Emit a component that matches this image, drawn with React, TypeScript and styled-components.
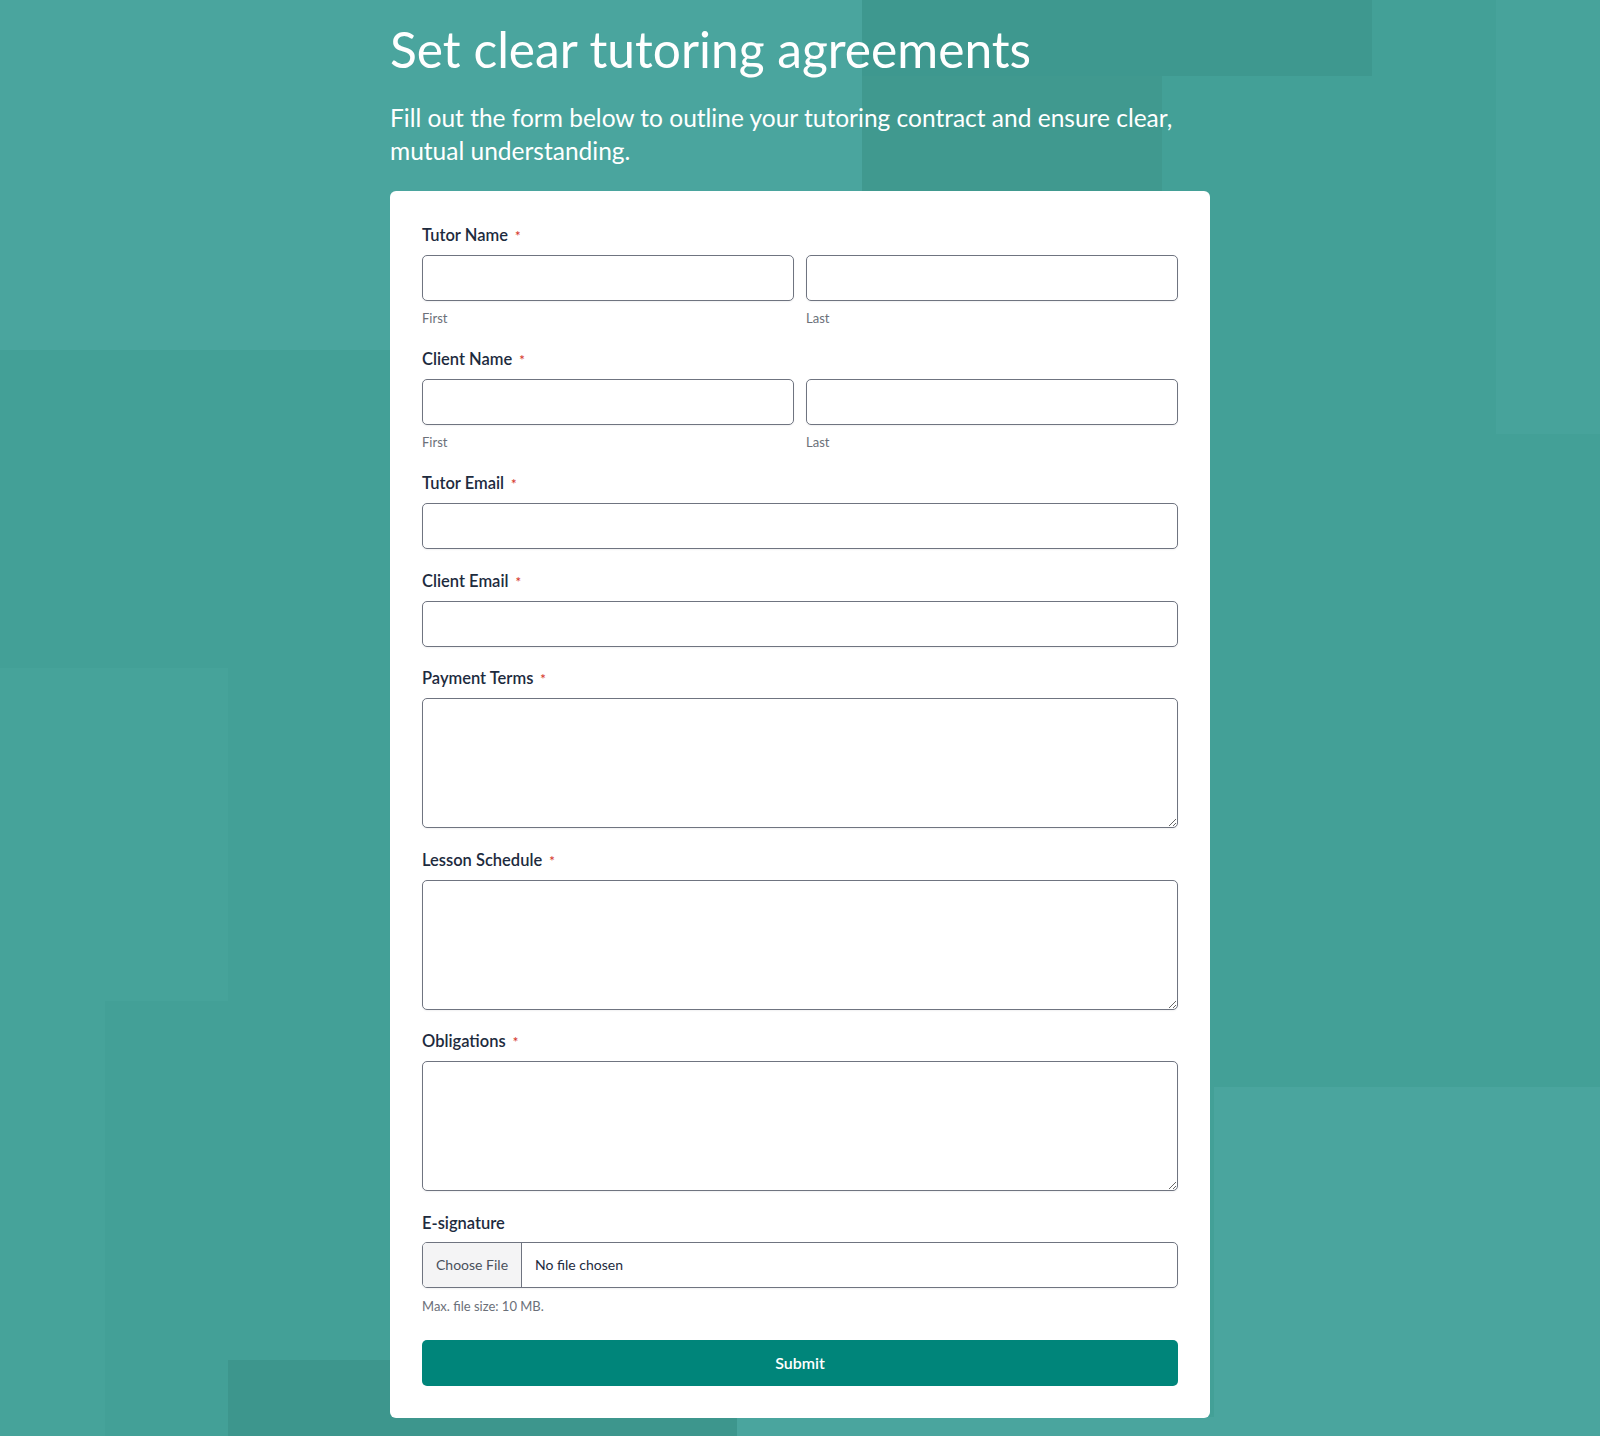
import styled, { createGlobalStyle } from 'styled-components';

const block = (color: string, x: number, y: number, w: number, h: number) =>
  `linear-gradient(${color}, ${color}) ${x}px ${y}px / ${w}px ${h}px no-repeat`;

const GlobalStyle = createGlobalStyle`
  * {
    box-sizing: border-box;
  }
  html, body {
    margin: 0;
    padding: 0;
  }
  body {
    font-family: Lato, "Open Sans", Arial, sans-serif;
    min-height: 1436px;
    background:
      ${block('#3e988f', 862, 0, 510, 76)},
      ${block('#40998f', 862, 76, 300, 115)},
      ${block('#47a39b', 1496, 0, 104, 434)},
      ${block('#4aa59e', 1214, 1087, 386, 349)},
      ${block('#4aa59e', 737, 1417, 477, 19)},
      ${block('#46a39a', 0, 668, 228, 333)},
      ${block('#46a39a', 0, 1001, 105, 435)},
      ${block('#3d968d', 228, 1360, 509, 76)},
      ${block('#4aa59e', 0, 0, 862, 350)},
      #43a097;
  }
`;

const Page = styled.main`
  width: 820px;
  margin: 0 auto;
  padding: 19px 0 19px;
`;

const Title = styled.h1`
  margin: 0;
  font-size: 49.7px;
  font-weight: 400;
  line-height: 60px;
  color: #ffffff;
`;

const Intro = styled.p`
  margin: 22px 0 0;
  font-size: 24.5px;
  line-height: 33px;
  color: #ffffff;
`;

const Card = styled.form`
  margin-top: 24px;
  background: #ffffff;
  border-radius: 6px;
  padding: 33px 32px 32px;
  display: flex;
  flex-direction: column;
  gap: 20.5px;
`;

const Field = styled.div`
  display: flex;
  flex-direction: column;
`;

const Label = styled.label`
  display: block;
  padding-top: 1px;
  margin-bottom: 9px;
  font-size: 16.5px;
  font-weight: 600;
  line-height: 20px;
  color: #1d2b3e;
`;

const Required = styled.span`
  margin-left: 7px;
  font-size: 13px;
  color: #d63c2f;
`;

const Split = styled.div`
  display: grid;
  grid-template-columns: 1fr 1fr;
  gap: 12px;
`;

const Input = styled.input`
  display: block;
  width: 100%;
  height: 46px;
  margin: 0;
  padding: 0 12px;
  border: 1px solid #6f7480;
  border-radius: 5px;
  background: #ffffff;
  box-shadow: 0 1px 2px rgba(16, 24, 40, 0.06);
  font: inherit;
  font-size: 15px;
  color: #1d2b3e;
  outline: none;
`;

const TextArea = styled.textarea`
  display: block;
  width: 100%;
  height: 130px;
  margin: 0;
  padding: 10px 12px;
  border: 1px solid #6f7480;
  border-radius: 5px;
  background: #ffffff;
  box-shadow: 0 1px 2px rgba(16, 24, 40, 0.06);
  font: inherit;
  font-size: 15px;
  color: #1d2b3e;
  resize: vertical;
  outline: none;
`;

const Hint = styled.span`
  display: block;
  margin: 8.5px 0 2px;
  font-size: 13px;
  line-height: 16px;
  color: #6b7079;
`;

const FileBox = styled.label`
  display: flex;
  align-items: stretch;
  height: 46px;
  border: 1px solid #6f7480;
  border-radius: 5px;
  overflow: hidden;
  box-shadow: 0 1px 2px rgba(16, 24, 40, 0.06);
  cursor: pointer;
`;

const HiddenFile = styled.input`
  display: none;
`;

const ChooseButton = styled.span`
  display: flex;
  align-items: center;
  padding: 0 13px;
  background: #f4f4f5;
  border-right: 1px solid #6f7480;
  font-size: 14px;
  color: #4a515c;
`;

const FileName = styled.span`
  display: flex;
  align-items: center;
  padding: 0 13px;
  font-size: 14px;
  color: #1d2b3e;
`;

const Note = styled.span`
  display: block;
  margin-top: 10px;
  font-size: 13px;
  line-height: 16px;
  color: #6b7079;
`;

const Submit = styled.button`
  margin-top: 5.5px;
  height: 46px;
  border: none;
  border-radius: 5px;
  background: #00857a;
  color: #ffffff;
  font: inherit;
  font-size: 16px;
  font-weight: 600;
  cursor: pointer;
`;

const NameField = ({ label, id }: { label: string; id: string }) => (
  <Field>
    <Label htmlFor={`${id}-first`}>
      {label}
      <Required>*</Required>
    </Label>
    <Split>
      <div>
        <Input id={`${id}-first`} type="text" />
        <Hint>First</Hint>
      </div>
      <div>
        <Input id={`${id}-last`} type="text" />
        <Hint>Last</Hint>
      </div>
    </Split>
  </Field>
);

const TextField = ({ label, id, multiline }: { label: string; id: string; multiline?: boolean }) => (
  <Field>
    <Label htmlFor={id}>
      {label}
      <Required>*</Required>
    </Label>
    {multiline ? <TextArea id={id} /> : <Input id={id} type="email" />}
  </Field>
);

export default function App() {
  return (
    <>
      <GlobalStyle />
      <Page>
        <Title>Set clear tutoring agreements</Title>
        <Intro>
          Fill out the form below to outline your tutoring contract and ensure clear, mutual understanding.
        </Intro>
        <Card onSubmit={(e) => e.preventDefault()}>
          <NameField label="Tutor Name" id="tutor-name" />
          <NameField label="Client Name" id="client-name" />
          <TextField label="Tutor Email" id="tutor-email" />
          <TextField label="Client Email" id="client-email" />
          <TextField label="Payment Terms" id="payment-terms" multiline />
          <TextField label="Lesson Schedule" id="lesson-schedule" multiline />
          <TextField label="Obligations" id="obligations" multiline />
          <Field>
            <Label htmlFor="e-signature">E-signature</Label>
            <FileBox>
              <HiddenFile id="e-signature" type="file" />
              <ChooseButton>Choose File</ChooseButton>
              <FileName>No file chosen</FileName>
            </FileBox>
            <Note>Max. file size: 10 MB.</Note>
          </Field>
          <Submit type="submit">Submit</Submit>
        </Card>
      </Page>
    </>
  );
}
